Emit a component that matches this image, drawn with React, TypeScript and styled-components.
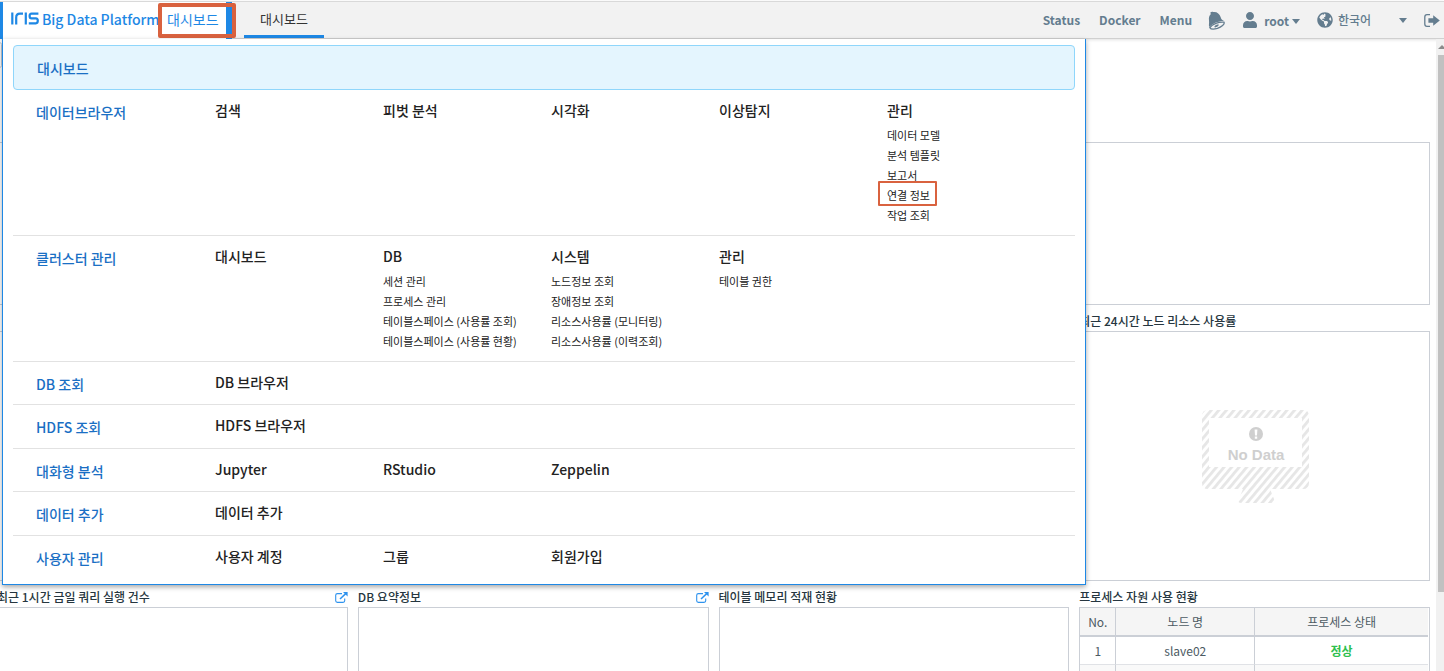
import React from "react";
import styled, { createGlobalStyle, css } from "styled-components";
import { FaUser, FaGlobeAmericas } from "react-icons/fa";

const color = {
  blue: "#1e88e5",
  deepBlue: "#1a6fc4",
  slate: "#647d8f",
  line: "#cbcfd6",
  mark: "#d9623f",
  title: "#263640",
};

const GlobalStyle = createGlobalStyle`
  *, *::before, *::after { box-sizing: border-box; }
  body {
    margin: 0;
    background: #fff;
    font-family: "Noto Sans CJK KR", "Noto Sans", sans-serif;
    font-size: 12px;
    line-height: 20px;
    color: #222;
  }
  button, select { font: inherit; color: inherit; background: none; border: 0; padding: 0; margin: 0; cursor: pointer; }
  a { color: inherit; text-decoration: none; }
  ul { list-style: none; margin: 0; padding: 0; }
  h2, h3 { margin: 0; }
`;

const Page = styled.div`
  position: relative;
  display: flex;
  flex-direction: column;
  height: 100vh;
  overflow: hidden;
`;

/* ---------- header ---------- */

const Header = styled.header`
  display: flex;
  flex: none;
  height: 38px;
  margin-top: 1px;
  background: #f2f2f2;
  border-top: 1px solid #d9d9d9;
  border-bottom: 1px solid #d0d0d0;
  box-shadow: 0 1px 3px rgba(0, 0, 0, 0.12);
  color: ${color.slate};
`;

const Brand = styled.div`
  display: flex;
  align-items: stretch;
  width: 232px;
  margin-bottom: -1px;
  background: #fff;
  border-left: 3px solid ${color.blue};
  border-right: 6px solid ${color.blue};
  color: ${color.blue};
`;

const BrandLink = styled.a`
  display: flex;
  align-items: center;
  gap: 3px;
  width: 155px;
  padding: 0 0 4px 8px;
  font-size: 14px;
  font-weight: 500;
  white-space: nowrap;

  svg {
    flex: none;
  }
`;

const ModuleButton = styled.button`
  position: relative;
  flex: 1;
  padding: 0 0 4px 9px;
  font-size: 14px;
  text-align: left;

  &::after {
    content: "";
    position: absolute;
    inset: 1px -10px 1px 0;
    border: 4px solid ${color.mark};
    border-radius: 2px;
  }
`;

const Tab = styled.button`
  width: 80px;
  margin-left: 12px;
  border-bottom: 3px solid ${color.blue};
  color: #333;
  font-size: 13px;
`;

const Tools = styled.nav`
  display: flex;
  align-items: center;
  margin-left: auto;
  padding-right: 4px;
  font-weight: 700;
`;

const ToolLink = styled.a`
  margin-right: 19px;

  &:last-of-type {
    margin-right: 16px;
  }
`;

const ToolButton = styled.button<{ $gap: number }>`
  display: flex;
  align-items: center;
  margin-right: ${(p) => p.$gap}px;
`;

const UserLabel = styled.span`
  display: flex;
  align-items: center;
  gap: 3px;
  margin: 2px 0 0 6px;
`;

const Caret = styled.i`
  border: 4px solid transparent;
  border-top: 5px solid currentColor;
  border-bottom: 0;
`;

const Language = styled.label`
  display: flex;
  align-items: center;
  gap: 5px;
  margin-right: 17px;

  select {
    width: 56px;
    appearance: none;
    font-weight: 500;
    outline: 0;
  }
`;

/* ---------- mega menu ---------- */

const MenuPanel = styled.nav`
  position: absolute;
  z-index: 2;
  top: 39px;
  left: 2px;
  width: calc(75% + 1px);
  padding: 6px 10px 5px;
  background: #fff;
  border: solid ${color.blue};
  border-width: 0 1px 1px;
  box-shadow: 0 2px 5px rgba(0, 0, 0, 0.35);
  font-size: 14px;
  font-weight: 500;
`;

const CurrentLink = styled.a`
  display: block;
  padding: 12px 23px 11px;
  background: #e4f5fe;
  border: 1px solid #8fd6fb;
  border-radius: 4px;
  color: ${color.deepBlue};
`;

const MenuRow = styled.section`
  display: grid;
  grid-template-columns: 202px repeat(5, 168px);
  padding: 10px 0;
  border-bottom: 1px solid #e2e2e2;
`;

const CompactRows = styled.div`
  display: grid;
  grid-auto-rows: 1fr;
  height: 217px;

  ${MenuRow}:last-child {
    border-bottom: 0;
  }
`;

const Category = styled.h2`
  padding: 2px 0 0 23px;
  color: ${color.deepBlue};
  font-size: 14px;
  font-weight: 500;
`;

const SubList = styled.ul`
  margin-top: 5px;
  font-size: 11px;
  font-weight: 400;
`;

const SubLink = styled.a<{ $marked?: boolean }>`
  position: relative;
  display: inline-block;
  vertical-align: top;

  ${(p) =>
    p.$marked &&
    css`
      &::after {
        content: "";
        position: absolute;
        inset: -4px -7px -1px -9px;
        border: 2px solid ${color.mark};
        border-radius: 1px;
      }
    `}
`;

/* ---------- dashboard ---------- */

const Body = styled.div`
  display: flex;
  flex: 1;
  min-height: 0;
`;

const Main = styled.main`
  flex: 1;
  min-width: 0;
  margin: 0 6px 0 -3px;
  overflow: hidden;
`;

const FilterBar = styled.div`
  height: 77px;
  padding-top: 3px;
`;

const FilterBox = styled.div`
  width: 5px;
  height: 26px;
  border: 1px solid ${color.line};
  border-radius: 3px;
`;

const Cards = styled.div`
  display: grid;
  grid-template-columns: repeat(4, minmax(0, 1fr));
  column-gap: 10px;
`;

const Card = styled.section<{ $span?: number }>`
  grid-column: span ${(p) => p.$span ?? 1};
`;

const CardHead = styled.header`
  display: flex;
  align-items: center;
  justify-content: space-between;
  height: 26px;
  padding-top: 6px;

  h3 {
    color: ${color.title};
    font-size: 12px;
    font-weight: 500;
  }

  a {
    display: flex;
    color: #2f93ee;
  }
`;

const CardBody = styled.div<{ $height: number }>`
  display: flex;
  align-items: center;
  justify-content: center;
  height: ${(p) => p.$height}px;
  border: 1px solid ${color.line};
`;

const EmptyBody = styled(CardBody)`
  padding: 2px 0 0 2px;
`;

const TableBody = styled(CardBody)`
  align-items: flex-start;
  padding-right: 1px;
`;

const Table = styled.table`
  width: 100%;
  border-collapse: separate;
  border-spacing: 0;
  table-layout: fixed;
  color: #4c5a63;
  text-align: center;

  th,
  td {
    height: 28px;
    padding: 0;
    border-right: 1px solid ${color.line};
    border-bottom: 1px solid #e0e2e6;
  }
  th {
    height: 29px;
    background: #f5f5f5;
    border-bottom: 2px solid ${color.line};
    font-weight: 400;
  }
  th:last-child,
  td:last-child {
    border-right: 0;
  }
  th:nth-child(1) { width: 36px; }
  th:nth-child(2) { width: 139px; }
  tbody tr:nth-child(even) { background: #f9f9f9; }
`;

const Ok = styled.td`
  color: #2fbf4f;
  font-weight: 700;
`;

const ScrollTrack = styled.div`
  display: flex;
  flex-direction: column;
  align-items: flex-end;
  width: 8px;
  background: #f1f1f1;
  overflow: hidden;
`;

const ScrollArrow = styled.i`
  margin: 6px -2px 6px 0;
  border: 4px solid transparent;
  border-top: 0;
  border-bottom: 4px solid #8b8b8b;
`;

const ScrollThumb = styled.div`
  width: 6px;
  height: 85%;
  background: #c1c1c1;
`;

/* ---------- drawings ---------- */

const Logo = () => (
  <svg width="28" height="13" viewBox="0 0 28 13" fill="none" stroke="currentColor" strokeWidth="2.2" aria-label="IRIS">
    <path d="M1.3 0.5V12.5" />
    <path d="M5.2 12.5V5.5Q5.2 1.6 9 1.6H12" />
    <path d="M14.8 0.5V12.5" />
    <path d="M27.4 1.6H20.6Q18.6 1.6 18.6 4T20.6 6.4H24.8Q26.8 6.4 26.8 8.8T24.8 11.3H17.8" />
  </svg>
);

const BellIcon = () => (
  <svg width="18" height="19" viewBox="0 0 18 19" aria-hidden="true">
    <path
      fill="currentColor"
      d="M2.2 1.8C3.2 0.6 4.4 0.4 5.2 1C8.6 0.4 11.6 2.6 12.6 6C13.2 8.2 14 9 16 10C11 9.8 5 12 1.4 16C0.4 14.4 1.4 12.4 1 9.4C0.6 6.6 1.2 4.4 2.9 3Z"
    />
    <path
      fill="none"
      stroke="currentColor"
      strokeWidth="1.3"
      d="M1.8 16.6C4.2 13.4 10.8 10.6 16 11.2C17 13 13.4 16 9.4 17.4C6 18.4 2.8 18.4 1.8 16.6Z"
    />
    <path fill="currentColor" d="M6.4 15.2C7.6 13.9 9.6 13.2 10.8 13.6C11 15 8 16.8 6.8 16.4Z" />
  </svg>
);

const SignOutIcon = () => (
  <svg width="16" height="13" viewBox="0 0 16 13" aria-hidden="true">
    <path fill="none" stroke="currentColor" strokeWidth="1.3" d="M6 0.7H3Q0.8 0.7 0.8 3V10Q0.8 12.3 3 12.3H6" />
    <path fill="currentColor" d="M4.4 4.2H9.2V1.2L15.8 6.5L9.2 11.8V8.8H4.4Z" />
  </svg>
);

const ExternalIcon = () => (
  <svg width="13" height="11" viewBox="0 0 13 11" aria-hidden="true">
    <path fill="none" stroke="currentColor" strokeWidth="1.1" d="M7 1.6H2.4Q0.7 1.6 0.7 3.2V8.8Q0.7 10.4 2.4 10.4H8Q9.7 10.4 9.7 8.8V6.4" />
    <path fill="none" stroke="currentColor" strokeWidth="1.5" d="M5 7L11 1.4" />
    <path fill="currentColor" d="M8 0H12.6V4.6Z" />
  </svg>
);

const NoData = () => (
  <svg width="108" height="94" viewBox="0 0 108 94" role="img" aria-label="No Data">
    <defs>
      <pattern id="stripes" width="5.8" height="8" patternUnits="userSpaceOnUse" patternTransform="rotate(40)">
        <rect width="2.8" height="8" fill="#e6e6e6" />
      </pattern>
    </defs>
    <path
      fill="url(#stripes)"
      fillRule="evenodd"
      d="M6 0H101Q107 0 107 6V73Q107 79 101 79H68L72 89Q73 93 69 93H39Q35 93 37 89L41 79H6Q0 79 0 73V6Q0 0 6 0ZM7 8V57H100V8Z"
    />
    <circle cx="54" cy="24" r="7" fill="#cfcfcf" />
    <path fill="#fff" d="M52.6 19.4H55.4L55 25.4H53ZM52.8 26.6H55.2V28.8H52.8Z" />
    <text x="54" y="50" textAnchor="middle" fill="#cfcfcf" fontFamily="Liberation Sans, sans-serif" fontSize="15" fontWeight="700">
      No Data
    </text>
  </svg>
);

/* ---------- content ---------- */

type Item = { label: string; subs?: string[] };
type Section = { category: string; items: Item[] };

const marked = "연결 정보";

const detailed: Section[] = [
  {
    category: "데이터브라우저",
    items: [
      { label: "검색" },
      { label: "피벗 분석" },
      { label: "시각화" },
      { label: "이상탐지" },
      { label: "관리", subs: ["데이터 모델", "분석 템플릿", "보고서", marked, "작업 조회"] },
    ],
  },
  {
    category: "클러스터 관리",
    items: [
      { label: "대시보드" },
      {
        label: "DB",
        subs: ["세션 관리", "프로세스 관리", "테이블스페이스 (사용률 조회)", "테이블스페이스 (사용률 현황)"],
      },
      {
        label: "시스템",
        subs: ["노드정보 조회", "장애정보 조회", "리소스사용률 (모니터링)", "리소스사용률 (이력조회)"],
      },
      { label: "관리", subs: ["테이블 권한"] },
    ],
  },
];

const compact: Section[] = [
  { category: "DB 조회", items: [{ label: "DB 브라우저" }] },
  { category: "HDFS 조회", items: [{ label: "HDFS 브라우저" }] },
  { category: "대화형 분석", items: [{ label: "Jupyter" }, { label: "RStudio" }, { label: "Zeppelin" }] },
  { category: "데이터 추가", items: [{ label: "데이터 추가" }] },
  { category: "사용자 관리", items: [{ label: "사용자 계정" }, { label: "그룹" }, { label: "회원가입" }] },
];

const Row = ({ section }: { section: Section }) => (
  <MenuRow>
    <Category>{section.category}</Category>
    {section.items.map((item) => (
      <div key={item.label}>
        <a href="#">{item.label}</a>
        {item.subs && (
          <SubList>
            {item.subs.map((sub) => (
              <li key={sub}>
                <SubLink href="#" $marked={sub === marked}>
                  {sub}
                </SubLink>
              </li>
            ))}
          </SubList>
        )}
      </div>
    ))}
  </MenuRow>
);

const Title = ({ text, link }: { text?: string; link?: boolean }) => (
  <CardHead>
    {text && <h3>{text}</h3>}
    {link && (
      <a href="#" aria-label="열기">
        <ExternalIcon />
      </a>
    )}
  </CardHead>
);

export default function App() {
  return (
    <Page>
      <GlobalStyle />
      <Header>
        <Brand>
          <BrandLink href="#">
            <Logo />
            Big Data Platform
          </BrandLink>
          <ModuleButton>대시보드</ModuleButton>
        </Brand>
        <Tab>대시보드</Tab>
        <Tools>
          <ToolLink href="#">Status</ToolLink>
          <ToolLink href="#">Docker</ToolLink>
          <ToolLink href="#">Menu</ToolLink>
          <ToolButton $gap={16} aria-label="알림">
            <BellIcon />
          </ToolButton>
          <ToolButton $gap={17}>
            <FaUser size={16} />
            <UserLabel>
              root
              <Caret />
            </UserLabel>
          </ToolButton>
          <Language>
            <FaGlobeAmericas size={16} />
            <select aria-label="언어">
              <option>한국어</option>
            </select>
            <Caret />
          </Language>
          <ToolButton $gap={0} aria-label="로그아웃">
            <SignOutIcon />
          </ToolButton>
        </Tools>
      </Header>

      <MenuPanel>
        <CurrentLink href="#">대시보드</CurrentLink>
        {detailed.map((s) => (
          <Row key={s.category} section={s} />
        ))}
        <CompactRows>
          {compact.map((s) => (
            <Row key={s.category} section={s} />
          ))}
        </CompactRows>
      </MenuPanel>

      <Body>
        <Main>
          <FilterBar>
            <FilterBox />
          </FilterBar>
          <Cards>
            <Card $span={4}>
              <Title />
              <CardBody $height={163} />
            </Card>
            <Card $span={3}>
              <Title />
              <CardBody $height={250} />
            </Card>
            <Card>
              <Title text="최근 24시간 노드 리소스 사용률" />
              <EmptyBody $height={250}>
                <NoData />
              </EmptyBody>
            </Card>
            <Card>
              <Title text="최근 1시간 금일 쿼리 실행 건수" link />
              <CardBody $height={250} />
            </Card>
            <Card>
              <Title text="DB 요약정보" link />
              <CardBody $height={250} />
            </Card>
            <Card>
              <Title text="테이블 메모리 적재 현황" />
              <CardBody $height={250} />
            </Card>
            <Card>
              <Title text="프로세스 자원 사용 현황" />
              <TableBody $height={250}>
                <Table>
                  <thead>
                    <tr>
                      <th>No.</th>
                      <th>노드 명</th>
                      <th>프로세스 상태</th>
                    </tr>
                  </thead>
                  <tbody>
                    <tr>
                      <td>1</td>
                      <td>slave02</td>
                      <Ok>정상</Ok>
                    </tr>
                    <tr>
                      <td />
                      <td />
                      <td />
                    </tr>
                  </tbody>
                </Table>
              </TableBody>
            </Card>
          </Cards>
        </Main>
        <ScrollTrack>
          <ScrollArrow />
          <ScrollThumb />
        </ScrollTrack>
      </Body>
    </Page>
  );
}
